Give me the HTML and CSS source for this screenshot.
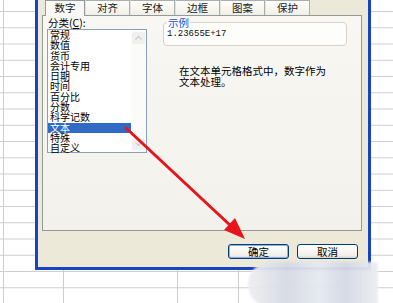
FILE: index.html
```
<!DOCTYPE html>
<html lang="zh-CN">
<head>
    <meta charset="UTF-8">
    <title>单元格格式</title>
    <link rel="stylesheet" href="styles.css">
</head>
<body>
<div class="sheet">
    <div class="dialog">
        <div class="tabs">
            <div class="tab active">数字</div>
            <div class="tab">对齐</div>
            <div class="tab">字体</div>
            <div class="tab">边框</div>
            <div class="tab">图案</div>
            <div class="tab">保护</div>
        </div>
        <div class="panel">
            <div class="leftCol">
                <div class="caption">分类(<u>C</u>):</div>
                <div class="listbox">
                    <ul class="items">
                        <li>常规</li>
                        <li>数值</li>
                        <li>货币</li>
                        <li>会计专用</li>
                        <li>日期</li>
                        <li>时间</li>
                        <li>百分比</li>
                        <li>分数</li>
                        <li>科学记数</li>
                        <li class="selected">文本</li>
                        <li>特殊</li>
                        <li>自定义</li>
                    </ul>
                    <div class="scrollbar">
                        <div class="arrowBtn">
                            <svg width="7" height="4" viewBox="0 0 7 4"><path d="M0.5 3.5 L3.5 0.5 L6.5 3.5" fill="none" stroke="#c9ccd4" stroke-width="1.2"/></svg>
                        </div>
                        <div class="arrowBtn">
                            <svg width="7" height="4" viewBox="0 0 7 4"><path d="M0.5 0.5 L3.5 3.5 L6.5 0.5" fill="none" stroke="#c9ccd4" stroke-width="1.2"/></svg>
                        </div>
                    </div>
                </div>
            </div>
            <div class="rightCol">
                <fieldset class="sample">
                    <legend>示例</legend>
                    <div class="sampleValue">1.23655E+17</div>
                </fieldset>
                <p class="desc">在文本单元格格式中，数字作为<br>文本处理。</p>
            </div>
        </div>
        <div class="footer">
            <button class="btn default">确定</button>
            <button class="btn">取消</button>
        </div>
    </div>
</div>

<svg class="annotation" width="393" height="303" viewBox="0 0 393 303">
    <line x1="126" y1="128" x2="232" y2="227" stroke="#e8141c" stroke-width="3" stroke-linecap="round"/>
    <polygon points="245,239 224,230 235,218" fill="#e8141c"/>
</svg>
<div class="smudge"></div>
</body>
</html>
```

FILE: styles.css
```
html, body {
    margin: 0;
    padding: 0;
}

body {
    width: 393px;
    height: 303px;
    overflow: hidden;
    position: relative;
    font-family: "Noto Sans CJK SC", sans-serif;
    font-size: 10.5px;
    color: #000;
    background-color: #fff;
    background-image:
        linear-gradient(to right, transparent 3px, #cdcdcd 3px, #cdcdcd 4px, transparent 4px),
        linear-gradient(to right, transparent 63px, #cdcdcd 63px, #cdcdcd 64px, transparent 64px),
        linear-gradient(to right, transparent 177px, #cdcdcd 177px, #cdcdcd 178px, transparent 178px),
        linear-gradient(to right, transparent 238px, #cdcdcd 238px, #cdcdcd 239px, transparent 239px),
        linear-gradient(to right, transparent 298px, #cdcdcd 298px, #cdcdcd 299px, transparent 299px),
        linear-gradient(to right, transparent 360px, #cdcdcd 360px, #cdcdcd 361px, transparent 361px),
        linear-gradient(to bottom, transparent 15.25px, #cdcdcd 15.25px);
    background-size: 100% 100%, 100% 100%, 100% 100%, 100% 100%, 100% 100%, 100% 100%, 100% 16.25px;
    background-position: 0 0, 0 0, 0 0, 0 0, 0 0, 0 0, 0 -4.25px;
    background-repeat: no-repeat, no-repeat, no-repeat, no-repeat, no-repeat, no-repeat, repeat;
}

.dialog {
    box-sizing: border-box;
    margin-left: 35px;
    width: 336px;
    height: 270px;
    background: #ece9d8;
    border: 3px solid #1744c4;
    border-top: none;
    display: flex;
    flex-direction: column;
}

.tabs {
    display: flex;
    height: 15px;
    margin-left: 7px;
    align-items: flex-end;
}

.tab {
    box-sizing: border-box;
    width: 45px;
    height: 15px;
    line-height: 13px;
    text-align: center;
    background: linear-gradient(#fdfdfb, #f1efe7);
    border: 1px solid #a9aeae;
    border-bottom: none;
    border-left-color: #e6e4dc;
    color: #222;
}

.tab.active {
    width: 40px;
    height: 16px;
    background: #f9f8f4;
    border-color: #919b9c;
    position: relative;
    z-index: 1;
    margin-bottom: -1px;
}

.panel {
    box-sizing: border-box;
    margin: 0 6px 0 4px;
    height: 216px;
    border: 1px solid #919b9c;
    background: linear-gradient(#f8f7f3, #f2f1eb);
    display: flex;
    padding-left: 4px;
}

.leftCol {
    width: 100px;
}

.caption {
    height: 13px;
    line-height: 13px;
    padding-left: 1px;
}

.caption u {
    text-decoration: underline;
}

.listbox {
    box-sizing: border-box;
    height: 124px;
    border: 1px solid #8aa0b8;
    background: #fff;
    display: flex;
}

.items {
    list-style: none;
    margin: 0;
    padding: 0;
    flex: 1;
}

.items li {
    height: 10.3px;
    line-height: 10.3px;
    font-size: 10px;
    padding-left: 2px;
    white-space: nowrap;
}

.items li.selected {
    background: #316ac5;
    color: #fff;
}

.scrollbar {
    width: 15px;
    background: #fbfbf9;
    display: flex;
    flex-direction: column;
    justify-content: space-between;
}

.arrowBtn {
    height: 12px;
    margin: 2px 1px;
    border-radius: 2px;
    background: #f0f0ee;
    display: flex;
    align-items: center;
    justify-content: center;
}

.rightCol {
    margin-left: 16px;
    width: 184px;
}

.sample {
    box-sizing: border-box;
    margin: 0;
    padding: 0 4px 5px 3px;
    height: 30px;
    border: 1px solid #d5d3c8;
    border-radius: 4px;
    background: #fdfdfc;
}

.sample legend {
    padding: 0 1px;
    margin-left: 0;
    line-height: 13px;
    color: #1f50d8;
}

.sampleValue {
    font-family: "Liberation Mono", monospace;
    font-size: 9px;
    line-height: 11px;
    color: #111;
}

.desc {
    margin: 20px 0 0 16px;
    line-height: 10.5px;
}

.footer {
    display: flex;
    justify-content: flex-end;
    gap: 8px;
    padding: 13px 10px 0 0;
}

.btn {
    box-sizing: border-box;
    width: 61px;
    height: 15px;
    padding: 0;
    font-family: "Noto Sans CJK SC", sans-serif;
    font-size: 10.5px;
    line-height: 12px;
    color: #000;
    border: 1px solid #003c74;
    border-radius: 3px;
    background: linear-gradient(#ffffff, #f0efe9 80%, #d8d5c8);
}

.btn.default {
    box-shadow: inset 0 0 0 1px #8fb0ef;
}

.annotation {
    position: absolute;
    left: 0;
    top: 0;
    pointer-events: none;
}

.smudge {
    position: absolute;
    left: 248px;
    top: 262px;
    width: 130px;
    height: 45px;
    border-radius: 22px 0 0 22px;
    background: linear-gradient(to right, #eeeff2, #d6dae5 30%, #e6e9f0 55%, #d5d9e4 75%, #eceef3);
    opacity: 0.95;
    filter: blur(1px);
}
```
